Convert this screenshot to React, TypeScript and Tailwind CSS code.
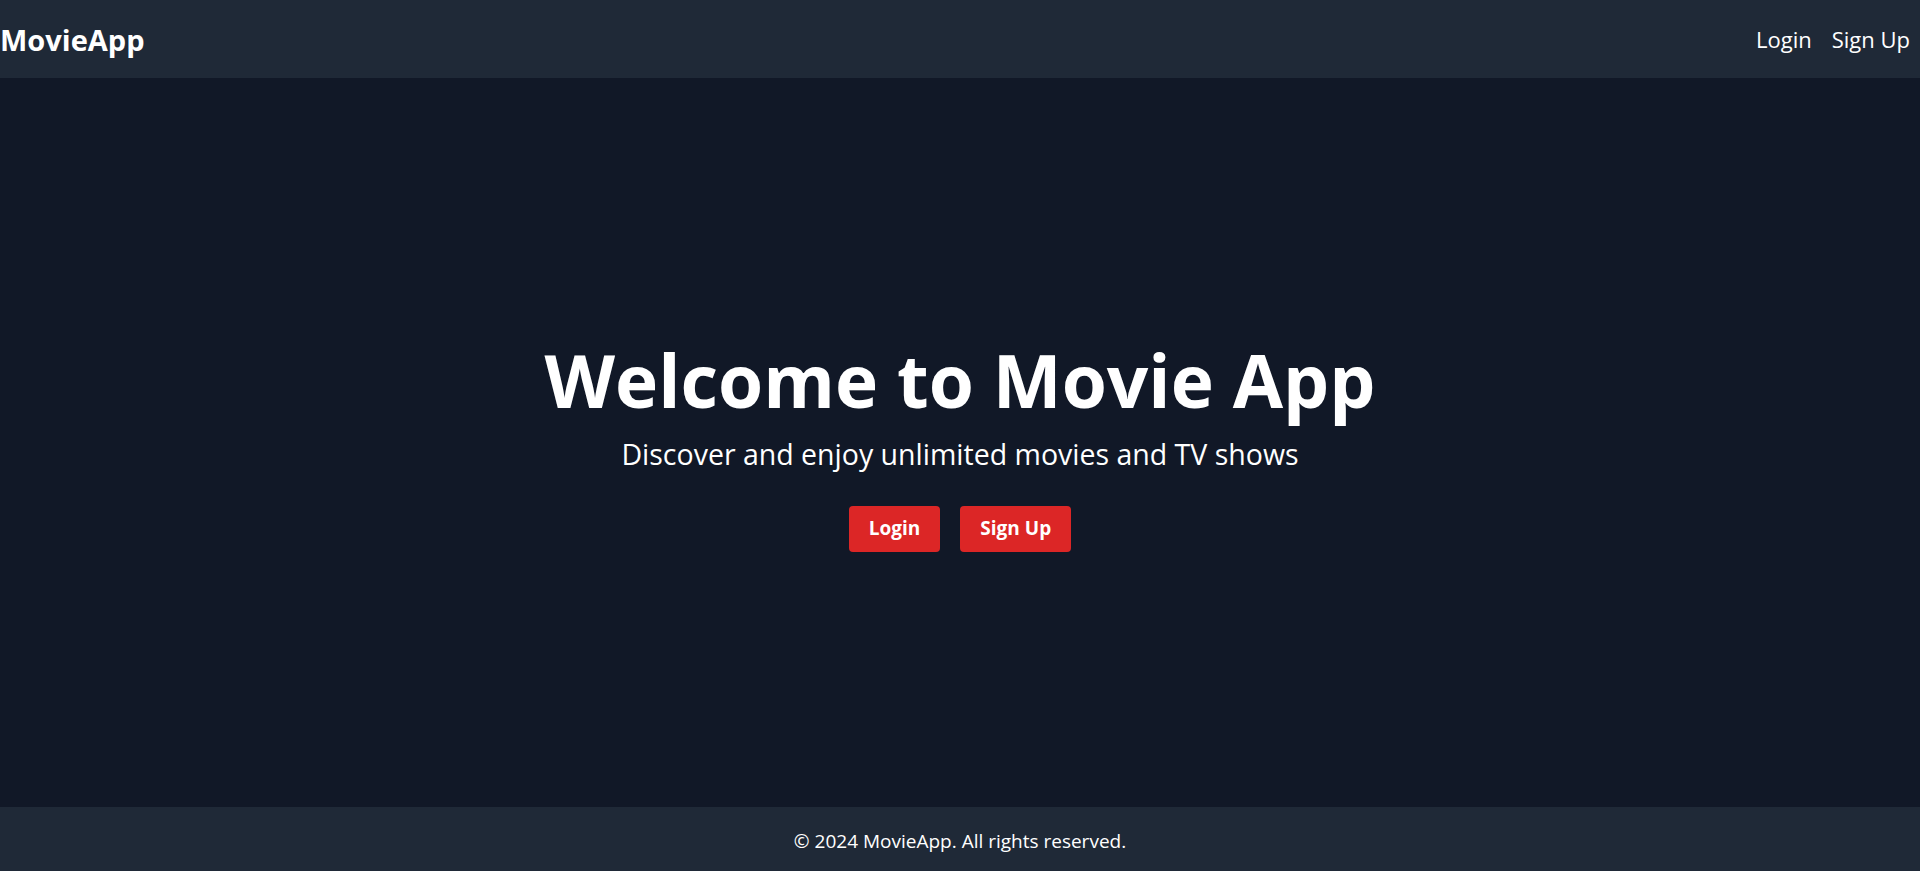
import React from 'react';

const App = () => {
  return (
    <div className="min-h-screen flex flex-col bg-[#111827] text-white font-['Segoe_UI','Open_Sans',sans-serif]">
      {/* Header */}
      <header className="h-[78px] bg-[#1f2937] flex items-center justify-between pl-0 pr-[10px]">
        <a href="#" className="text-[29px] font-bold leading-none">MovieApp</a>
        <nav className="flex items-center gap-5 text-[22px]">
          <a href="#">Login</a>
          <a href="#">Sign Up</a>
        </nav>
      </header>

      {/* Hero */}
      <main className="flex-1 flex flex-col items-center justify-center text-center">
        <h1 className="text-[73px] font-bold leading-tight">Welcome to Movie App</h1>
        <p className="text-[28.5px] mt-2">Discover and enjoy unlimited movies and TV shows</p>
        <div className="flex gap-5 mt-[30px]">
          <button className="bg-[#dc2626] rounded-[4px] px-5 h-[46px] text-[19px] font-bold">Login</button>
          <button className="bg-[#dc2626] rounded-[4px] px-5 h-[46px] text-[19px] font-bold">Sign Up</button>
        </div>
      </main>

      {/* Footer */}
      <footer className="h-[64px] bg-[#1f2937] flex items-center justify-center pt-1 text-[19px]">
        © 2024 MovieApp. All rights reserved.
      </footer>
    </div>
  );
};

export default App;
